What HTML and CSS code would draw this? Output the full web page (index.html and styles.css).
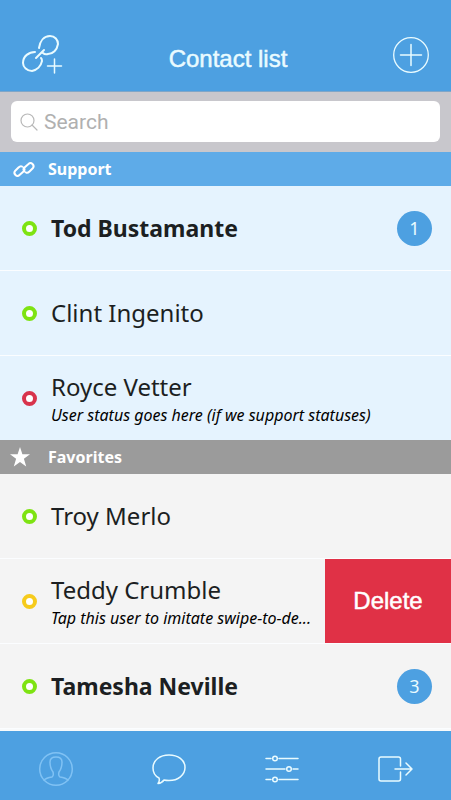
FILE: index.html
```
<!DOCTYPE html>
<html lang="en">
<head>
    <meta charset="UTF-8">
    <meta name="viewport" content="width=device-width, initial-scale=1.0">
    <title>Contact list</title>
    <link rel="stylesheet" href="styles.css">
</head>
<body>
    <header class="top-bar">
        <button type="button" class="icon-btn" aria-label="Link contact">
            <svg width="44" height="44" viewBox="0 0 44 44">
                <path d="M19 15C20 8 24 3 30 3C35 3 38 7 38 11C37 17 33 21 28 21Q25 22 23 20M15 19C9 19 3 23 3 30C3 34 7 38 12 38C17 37 21 33 22 28Q22 26 21 25M16 25L24 17" stroke-width="2"/>
                <path d="M34.500 26v14M27.500 33h14" stroke-width="1.500"/>
            </svg>
        </button>
        <h1>Contact list</h1>
        <button type="button" class="icon-btn" aria-label="Add contact">
            <svg width="38" height="38" viewBox="0 0 38 38">
                <circle cx="19" cy="19" r="17.300" stroke-width="1.300"/>
                <path d="M19 8.500v21M8.500 19h21" stroke-width="1.500"/>
            </svg>
        </button>
    </header>

    <!-- Search -->
    <form class="search-bar">
        <label class="search-box">
            <svg width="18" height="18" viewBox="0 0 18 18">
                <circle cx="7.500" cy="7.500" r="6.500"/>
                <path d="M12 12l5 5"/>
            </svg>
            <input type="text" placeholder="Search" aria-label="Search">
        </label>
    </form>

    <main>
        <!-- Support -->
        <section class="group support">
            <h2>
                <svg width="26" height="20" viewBox="-2 0 26 20">
                    <path d="M10 7.500Q8.500 6.500 6.500 8.500L3 12Q1.500 14 3.500 16Q5.500 18 7.500 16L11.500 12.500Q13.500 10.500 11.500 8.500M14 13.500Q15.500 14.500 17.500 12.500L21 9Q22.500 7 20.500 5Q18.500 3 16.500 5L12.500 8.500Q10.500 10.500 12.500 12.500"/>
                </svg>
                Support
            </h2>
            <ul>
                <li class="unread">
                    <span class="dot online"></span>
                    <div class="info"><p class="name">Tod Bustamante</p></div>
                    <span class="badge">1</span>
                </li>
                <li>
                    <span class="dot online"></span>
                    <div class="info"><p class="name">Clint Ingenito</p></div>
                </li>
                <li>
                    <span class="dot busy"></span>
                    <div class="info">
                        <p class="name">Royce Vetter</p>
                        <p class="status">User status goes here (if we support statuses)</p>
                    </div>
                </li>
            </ul>
        </section>

        <!-- Favorites -->
        <section class="group favorites">
            <h2>
                <svg class="star" width="26" height="20" viewBox="0 0 26 20">
                    <path d="M10 0L12.400 7.200L20 7.200L13.900 11.700L16.200 19.500L10 15L3.800 19.500L6.100 11.700L0 7.200L7.600 7.200Z"/>
                </svg>
                Favorites
            </h2>
            <ul>
                <li>
                    <span class="dot online"></span>
                    <div class="info"><p class="name">Troy Merlo</p></div>
                </li>
                <li class="swiped">
                    <span class="dot away"></span>
                    <div class="info">
                        <p class="name">Teddy Crumble</p>
                        <p class="status">Tap this user to imitate swipe-to-de...</p>
                    </div>
                    <button type="button" class="delete">Delete</button>
                </li>
                <li class="unread">
                    <span class="dot online"></span>
                    <div class="info"><p class="name">Tamesha Neville</p></div>
                    <span class="badge">3</span>
                </li>
            </ul>
        </section>
    </main>

    <nav class="tab-bar">
        <a href="#contacts" class="current" aria-label="Contacts">
            <svg width="36" height="36" viewBox="0 0 36 36">
                <circle cx="18" cy="18" r="16.300"/>
                <path d="M6 29Q8 27 14 26Q16 25 15 21C12 17 12 14 12 11Q12 6 18 6Q24 6 24 11C24 14 24 17 21 21Q20 25 22 26Q28 27 30 29"/>
            </svg>
        </a>
        <a href="#chats" aria-label="Chats">
            <svg width="36" height="36" viewBox="0 0 36 36">
                <path d="M8 27C4 25 2 21 2 17C2 9 9 4 18 4C27 4 34 9 34 16.500C34 24 27 29.500 18 29.500Q15 29.500 13 29Q11 32 7 32.500Q9 30 8 27Z"/>
            </svg>
        </a>
        <a href="#settings" aria-label="Settings">
            <svg width="36" height="36" viewBox="0 0 36 36">
                <path d="M2 7.500h5M15 7.500h19M2 18h19M29 18h5M2 28.500h5M15 28.500h19"/>
                <circle cx="11" cy="7.500" r="2.300"/>
                <circle cx="25" cy="18" r="2.300"/>
                <circle cx="11" cy="28.500" r="2.300"/>
            </svg>
        </a>
        <a href="#logout" aria-label="Log out">
            <svg width="36" height="36" viewBox="0 0 36 36">
                <path d="M23.500 15V8Q23.500 6 21.500 6H4Q2 6 2 8V28Q2 30 4 30H21.500Q23.500 30 23.500 28V21M18 18H34M29 12L35 18L29 24"/>
            </svg>
        </a>
    </nav>
</body>
</html>
```

FILE: styles.css
```
* {
    box-sizing: border-box;
}
body {
    font-family: "Noto Sans", "Open Sans", sans-serif;
    margin: 0;
    min-height: 100vh;
    display: flex;
    flex-direction: column;
    background: #f8fafb;
    color: #1c1f22;
}
h1, h2, p, ul {
    margin: 0;
    padding: 0;
}
ul {
    list-style: none;
}
button {
    border: none;
    padding: 0;
    cursor: pointer;
}
svg {
    display: block;
    flex: none;
    fill: none;
    stroke: #e9fbff;
    stroke-linecap: round;
    stroke-linejoin: round;
}
main {
    flex: 1;
}

/* Top bar */
.top-bar {
    display: flex;
    align-items: center;
    justify-content: space-between;
    height: 92px;
    padding: 18px 21px 0 20px;
    background: #4da0e1;
    border-bottom: 1px solid #7fa6c8;
}
.top-bar h1 {
    font-family: "Liberation Sans", Arial, sans-serif;
    font-size: 24px;
    font-weight: normal;
    line-height: 28px;
    padding-top: 8px;
    color: #e9fbff;
    -webkit-text-stroke: 0.5px #e9fbff;
}
.icon-btn {
    background: none;
}

/* Search */
.search-bar {
    padding: 9px 11px 10px;
    background: #c8c7cc;
}
.search-box {
    display: flex;
    align-items: center;
    gap: 6px;
    height: 41px;
    padding: 0 9px;
    border-radius: 6px;
    background: #fff;
}
.search-box svg {
    stroke: #b8b8b8;
    stroke-width: 1.2;
}
.search-box input {
    flex: 1;
    min-width: 0;
    border: none;
    padding: 0;
    outline: none;
    background: none;
    font-family: Roboto, sans-serif;
    font-size: 21px;
}
.search-box input::placeholder {
    color: #b0b0b0;
}

/* Contact groups */
.group h2 {
    display: flex;
    align-items: center;
    gap: 12px;
    height: 34px;
    padding-left: 10px;
    font-size: 16px;
    line-height: 22px;
    color: #fff;
}
.group h2 svg {
    stroke: #fff;
    stroke-width: 2;
}
.group h2 .star {
    fill: #fff;
    stroke: none;
}
.support h2 {
    background: #5eabe8;
}
.support ul {
    background: #e5f3fe;
}
.favorites h2 {
    background: #9b9b9b;
}
.favorites ul {
    background: #f4f4f4;
}
.group li {
    display: flex;
    align-items: center;
    height: 85px;
    padding: 0 19px 0 22px;
    border-bottom: 1px solid #fbfdff;
}
.support li:last-child {
    height: 84px;
    border-bottom: none;
}
.dot {
    flex: none;
    width: 15px;
    height: 15px;
    margin-right: 14px;
    border: 4px solid;
    border-radius: 50%;
    background: #fff;
}
.online {
    border-color: #7ee312;
}
.busy {
    border-color: #d8334c;
}
.away {
    border-color: #f6cb1c;
}
.info {
    flex: 1;
    min-width: 0;
}
.name {
    font-size: 24px;
    line-height: 34px;
}
.unread .name {
    font-size: 23px;
    font-weight: bold;
}
.status {
    font-size: 16px;
    font-style: italic;
    line-height: 22px;
    color: #000;
    white-space: nowrap;
}
.badge {
    width: 35px;
    height: 35px;
    border-radius: 50%;
    background: #4da0e1;
    color: #e9fbff;
    font-size: 18px;
    line-height: 35px;
    text-align: center;
}
.group .swiped {
    padding-right: 0;
}
.delete {
    width: 28%;
    min-width: 126px;
    align-self: stretch;
    background: #e03146;
    color: #fff;
    font-family: "Liberation Sans", Arial, sans-serif;
    font-size: 24px;
    -webkit-text-stroke: 0.5px #fff;
}

/* Tab bar */
.tab-bar {
    display: flex;
    align-items: center;
    height: 69px;
    padding-top: 6px;
    background: #4da0e1;
}
.tab-bar a {
    flex: 1;
    display: flex;
    justify-content: center;
}
.tab-bar svg {
    stroke-width: 1.5;
}
.tab-bar .current svg {
    stroke: #80c2f4;
}
```
